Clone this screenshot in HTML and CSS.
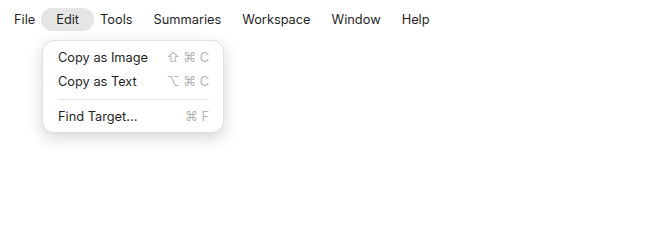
FILE: index.html
```html
<!DOCTYPE html>
<html lang="en">
<head>
    <meta charset="UTF-8">
    <title>Menu</title>
    <link rel="stylesheet" href="styles.css">
</head>
<body>
    <div class="menubar">
        <div class="menu-item">File</div>
        <div class="menu-item active">Edit</div>
        <div class="menu-item">Tools</div>
        <div class="menu-item">Summaries</div>
        <div class="menu-item">Workspace</div>
        <div class="menu-item">Window</div>
        <div class="menu-item">Help</div>
    </div>
    <div class="dropdown">
        <div class="entry"><span>Copy as Image</span><span class="keys">⇧ ⌘ C</span></div>
        <div class="entry"><span>Copy as Text</span><span class="keys">⌥ ⌘ C</span></div>
        <div class="sep"></div>
        <div class="entry"><span>Find Target...</span><span class="keys">⌘ F</span></div>
    </div>
</body>
</html>
```

FILE: styles.css
```css
html, body {
    height: 100%;
}
body {
    margin: 0;
    background: #fff;
    font-family: Inter, "Noto Sans", "DejaVu Sans", sans-serif;
    font-size: 12.8px;
    color: #1f1f1f;
}
.menubar {
    display: flex;
    padding: 8px 0 0 0;
}
.menu-item {
    height: 23px;
    line-height: 23px;
    padding: 0 15px;
    margin: 0 -4.5px;
    border-radius: 12px;
}
.menu-item:first-child {
    margin-left: -1px;
}
.menu-item.active {
    background: #e5e5e5;
}
.dropdown {
    width: 182px;
    box-sizing: border-box;
    margin: 9px 0 0 42px;
    padding: 5px 0 3px;
    background: #fff;
    border: 1px solid #e0e0e0;
    border-radius: 12px;
    box-shadow: 0 5px 16px rgba(0, 0, 0, 0.17);
}
.entry {
    display: flex;
    justify-content: space-between;
    height: 24px;
    line-height: 24px;
    padding: 0 14px 0 15px;
}
.keys {
    color: #b3b3b3;
    font-size: 12.8px;
}
.sep {
    height: 1px;
    background: #e6e6e6;
    margin: 5px 14px 5px 15px;
}
```
